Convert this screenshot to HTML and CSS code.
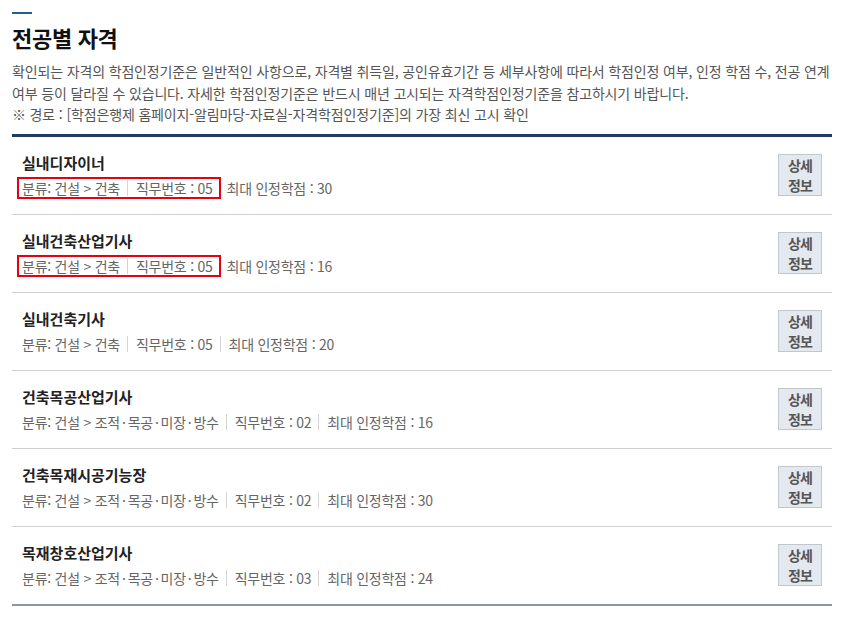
FILE: index.html
```html
<!DOCTYPE html>
<html lang="ko">
<head>
  <meta charset="UTF-8" />
  <meta name="viewport" content="width=device-width, initial-scale=1.0"/>
  <title>전공별 자격</title>
  <link rel="stylesheet" href="styles.css">
</head>
<body>

  <div class="wrap">
    <div class="title-bar"></div>
    <h2>전공별 자격</h2>
    <p class="desc">
      확인되는 자격의 학점인정기준은 일반적인 사항으로, 자격별 취득일, 공인유효기간 등 세부사항에 따라서 학점인정 여부, 인정 학점 수, 전공 연계 여부 등이 달라질 수 있습니다. 자세한 학점인정기준은 반드시 매년 고시되는 자격학점인정기준을 참고하시기 바랍니다.<br>
      ※ 경로 : [학점은행제 홈페이지-알림마당-자료실-자격학점인정기준]의 가장 최신 고시 확인
    </p>

    <ul class="cert-list">
      <li class="cert">
        <div class="info">
          <strong>실내디자이너</strong>
          <div class="meta">
            <span class="hl">
              <span class="item">분류: 건설 &gt; 건축</span>
              <span class="item">직무번호 : 05</span>
            </span>
            <span class="item">최대 인정학점 : 30</span>
          </div>
        </div>
        <button class="more">상세<br>정보</button>
      </li>
      <li class="cert">
        <div class="info">
          <strong>실내건축산업기사</strong>
          <div class="meta">
            <span class="hl">
              <span class="item">분류: 건설 &gt; 건축</span>
              <span class="item">직무번호 : 05</span>
            </span>
            <span class="item">최대 인정학점 : 16</span>
          </div>
        </div>
        <button class="more">상세<br>정보</button>
      </li>
      <li class="cert">
        <div class="info">
          <strong>실내건축기사</strong>
          <div class="meta">
            <span class="item">분류: 건설 &gt; 건축</span>
            <span class="item">직무번호 : 05</span>
            <span class="item">최대 인정학점 : 20</span>
          </div>
        </div>
        <button class="more">상세<br>정보</button>
      </li>
      <li class="cert">
        <div class="info">
          <strong>건축목공산업기사</strong>
          <div class="meta">
            <span class="item">분류: 건설 &gt; 조적<span class="dot">·</span>목공<span class="dot">·</span>미장<span class="dot">·</span>방수</span>
            <span class="item">직무번호 : 02</span>
            <span class="item">최대 인정학점 : 16</span>
          </div>
        </div>
        <button class="more">상세<br>정보</button>
      </li>
      <li class="cert">
        <div class="info">
          <strong>건축목재시공기능장</strong>
          <div class="meta">
            <span class="item">분류: 건설 &gt; 조적<span class="dot">·</span>목공<span class="dot">·</span>미장<span class="dot">·</span>방수</span>
            <span class="item">직무번호 : 02</span>
            <span class="item">최대 인정학점 : 30</span>
          </div>
        </div>
        <button class="more">상세<br>정보</button>
      </li>
      <li class="cert">
        <div class="info">
          <strong>목재창호산업기사</strong>
          <div class="meta">
            <span class="item">분류: 건설 &gt; 조적<span class="dot">·</span>목공<span class="dot">·</span>미장<span class="dot">·</span>방수</span>
            <span class="item">직무번호 : 03</span>
            <span class="item">최대 인정학점 : 24</span>
          </div>
        </div>
        <button class="more">상세<br>정보</button>
      </li>
    </ul>
  </div>

</body>
</html>
```

FILE: styles.css
```css
:root {
  --navy: #1d3b64;
  --accent: #1f6194;
  --text: #555;
  --line: #cfcfcf;
}
* { box-sizing: border-box; }
body {
  margin: 0;
  background: #fff;
  color: #222;
  font-family: "Noto Sans CJK KR", "Noto Sans", sans-serif;
}
.wrap {
  width: 820px;
  margin-left: 12px;
  padding-top: 12px;
}
.title-bar {
  width: 20px;
  height: 2px;
  background: var(--accent);
}
h2 {
  margin: 8px 0 0;
  font-size: 22px;
  line-height: 30px;
  font-weight: 700;
  letter-spacing: -0.3px;
  color: #111;
}
.desc {
  margin: 9px 0 0;
  font-size: 14px;
  line-height: 21.5px;
  letter-spacing: -0.15px;
  color: var(--text);
}

/* list of certificates */
.cert-list {
  list-style: none;
  margin: 8px 0 0;
  padding: 0;
  border-top: 3px solid var(--navy);
}
.cert {
  display: flex;
  align-items: center;
  justify-content: space-between;
  height: 78px;
  padding: 0 10px;
  border-bottom: 1px solid var(--line);
}
.cert:last-child {
  height: 79px;
  border-bottom: 2px solid #8b97a4;
}
.info strong {
  display: block;
  font-size: 15px;
  line-height: 22px;
  letter-spacing: 0;
  color: #222;
}
.meta {
  display: flex;
  align-items: center;
  height: 22px;
  margin-top: 3px;
  font-size: 14px;
  letter-spacing: -0.25px;
  color: #666;
}
.meta .item {
  line-height: 16px;
  white-space: nowrap;
}
.meta .dot {
  margin: 0 2px;
}
.meta .item + .item,
.meta .hl + .item {
  margin-left: 7px;
  padding-left: 8px;
  border-left: 1px solid #d5d5d5;
}
.hl {
  display: flex;
  align-items: center;
  padding: 1px 6px 1px 3px;
  margin: -3px -8px -3px -5px;
  border: 2px solid #e60012;
}
.meta .hl + .item {
  padding-left: 6px;
  border-left-color: transparent;
}

.more {
  width: 44px;
  height: 42px;
  padding: 0;
  border: 1px solid #c2c6ce;
  background: #e4e8ef;
  color: #555;
  font-family: inherit;
  font-size: 14px;
  font-weight: 700;
  line-height: 20px;
  letter-spacing: -1px;
  cursor: pointer;
}
```
